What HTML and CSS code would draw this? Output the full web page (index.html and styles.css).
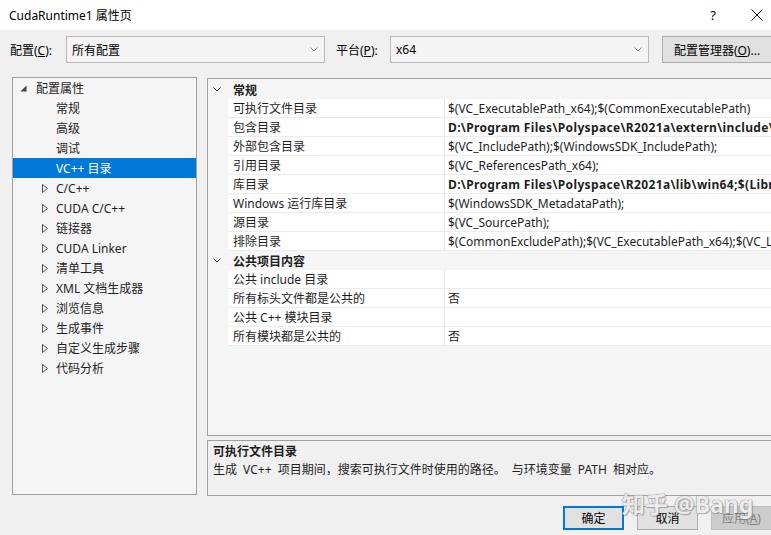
FILE: index.html
```html
<!DOCTYPE html>
<html lang="zh-CN">
<head>
<meta charset="utf-8">
<title>CudaRuntime1 属性页</title>
<link rel="stylesheet" href="styles.css">
</head>
<body>
<div class="window">
  <div class="titlebar">
    <span class="title">CudaRuntime1 属性页</span>
    <span class="help">?</span>
    <span class="close"><svg width="12" height="12" viewBox="0 0 12 12"><path d="M0.5 0.5L11.5 11.5M11.5 0.5L0.5 11.5" stroke="#111" stroke-width="1" fill="none"/></svg></span>
  </div>

  <div class="config-row">
    <span class="lbl lbl-config">配置(<u>C</u>):</span>
    <div class="combo"><span>所有配置</span><svg class="combo-arrow" width="8" height="5" viewBox="0 0 8 5"><polyline points="0.5,0.5 4,4 7.5,0.5" stroke="#808080" fill="none"/></svg></div>
    <span class="lbl lbl-platform">平台(<u>P</u>):</span>
    <div class="combo"><span>x64</span><svg class="combo-arrow" width="8" height="5" viewBox="0 0 8 5"><polyline points="0.5,0.5 4,4 7.5,0.5" stroke="#808080" fill="none"/></svg></div>
    <button class="btn btn-manager">配置管理器(<u>O</u>)...</button>
  </div>

  <div class="main">
    <div class="tree">
      <div class="node root"><span class="twisty"><svg width="7" height="7" viewBox="0 0 7 7"><polygon points="6.5,0.5 6.5,6.5 0.5,6.5" fill="#404040"/></svg></span>配置属性</div>
      <div class="node child"><span class="twisty"></span>常规</div>
      <div class="node child"><span class="twisty"></span>高级</div>
      <div class="node child"><span class="twisty"></span>调试</div>
      <div class="node child selected"><span class="twisty"></span>VC++ 目录</div>
      <div class="node child"><span class="twisty"><svg width="6" height="9" viewBox="0 0 6 9"><polygon points="0.5,0.5 5.5,4.5 0.5,8.5" fill="none" stroke="#505050"/></svg></span>C/C++</div>
      <div class="node child"><span class="twisty"><svg width="6" height="9" viewBox="0 0 6 9"><polygon points="0.5,0.5 5.5,4.5 0.5,8.5" fill="none" stroke="#505050"/></svg></span>CUDA C/C++</div>
      <div class="node child"><span class="twisty"><svg width="6" height="9" viewBox="0 0 6 9"><polygon points="0.5,0.5 5.5,4.5 0.5,8.5" fill="none" stroke="#505050"/></svg></span>链接器</div>
      <div class="node child"><span class="twisty"><svg width="6" height="9" viewBox="0 0 6 9"><polygon points="0.5,0.5 5.5,4.5 0.5,8.5" fill="none" stroke="#505050"/></svg></span>CUDA Linker</div>
      <div class="node child"><span class="twisty"><svg width="6" height="9" viewBox="0 0 6 9"><polygon points="0.5,0.5 5.5,4.5 0.5,8.5" fill="none" stroke="#505050"/></svg></span>清单工具</div>
      <div class="node child"><span class="twisty"><svg width="6" height="9" viewBox="0 0 6 9"><polygon points="0.5,0.5 5.5,4.5 0.5,8.5" fill="none" stroke="#505050"/></svg></span>XML 文档生成器</div>
      <div class="node child"><span class="twisty"><svg width="6" height="9" viewBox="0 0 6 9"><polygon points="0.5,0.5 5.5,4.5 0.5,8.5" fill="none" stroke="#505050"/></svg></span>浏览信息</div>
      <div class="node child"><span class="twisty"><svg width="6" height="9" viewBox="0 0 6 9"><polygon points="0.5,0.5 5.5,4.5 0.5,8.5" fill="none" stroke="#505050"/></svg></span>生成事件</div>
      <div class="node child"><span class="twisty"><svg width="6" height="9" viewBox="0 0 6 9"><polygon points="0.5,0.5 5.5,4.5 0.5,8.5" fill="none" stroke="#505050"/></svg></span>自定义生成步骤</div>
      <div class="node child"><span class="twisty"><svg width="6" height="9" viewBox="0 0 6 9"><polygon points="0.5,0.5 5.5,4.5 0.5,8.5" fill="none" stroke="#505050"/></svg></span>代码分析</div>
    </div>

    <div class="right">
      <div class="grid">
        <div class="row cat"><span class="gut"><svg width="8" height="5" viewBox="0 0 8 5"><polyline points="0.5,0.5 4,4 7.5,0.5" stroke="#333" fill="none"/></svg></span><span class="cat-name">常规</span></div>
        <div class="row prop"><span class="gut"></span><span class="name">可执行文件目录</span><span class="val">$(VC_ExecutablePath_x64);$(CommonExecutablePath)</span></div>
        <div class="row prop"><span class="gut"></span><span class="name">包含目录</span><span class="val bold">D:\Program Files\Polyspace\R2021a\extern\include\win64;$(IncludePath)</span></div>
        <div class="row prop"><span class="gut"></span><span class="name">外部包含目录</span><span class="val">$(VC_IncludePath);$(WindowsSDK_IncludePath);</span></div>
        <div class="row prop"><span class="gut"></span><span class="name">引用目录</span><span class="val">$(VC_ReferencesPath_x64);</span></div>
        <div class="row prop"><span class="gut"></span><span class="name">库目录</span><span class="val bold">D:\Program Files\Polyspace\R2021a\lib\win64;$(LibraryPath)</span></div>
        <div class="row prop"><span class="gut"></span><span class="name">Windows 运行库目录</span><span class="val">$(WindowsSDK_MetadataPath);</span></div>
        <div class="row prop"><span class="gut"></span><span class="name">源目录</span><span class="val">$(VC_SourcePath);</span></div>
        <div class="row prop"><span class="gut"></span><span class="name">排除目录</span><span class="val">$(CommonExcludePath);$(VC_ExecutablePath_x64);$(VC_LibraryPath_x64)</span></div>
        <div class="row cat"><span class="gut"><svg width="8" height="5" viewBox="0 0 8 5"><polyline points="0.5,0.5 4,4 7.5,0.5" stroke="#333" fill="none"/></svg></span><span class="cat-name">公共项目内容</span></div>
        <div class="row prop"><span class="gut"></span><span class="name">公共 include 目录</span><span class="val"></span></div>
        <div class="row prop"><span class="gut"></span><span class="name">所有标头文件都是公共的</span><span class="val">否</span></div>
        <div class="row prop"><span class="gut"></span><span class="name">公共 C++ 模块目录</span><span class="val"></span></div>
        <div class="row prop"><span class="gut"></span><span class="name">所有模块都是公共的</span><span class="val">否</span></div>
      </div>
      <div class="desc">
        <div class="desc-title">可执行文件目录</div>
        <div class="desc-text">生成 VC++ 项目期间，搜索可执行文件时使用的路径。 与环境变量 PATH 相对应。</div>
      </div>
    </div>
  </div>

  <div class="buttons">
    <button class="btn btn-ok">确定</button>
    <button class="btn">取消</button>
    <button class="btn btn-disabled">应用(<u>A</u>)</button>
  </div>

  <div class="watermark">知乎 @Bang</div>
</div>
</body>
</html>
```

FILE: styles.css
```css
* { box-sizing: border-box; }

html, body {
  margin: 0;
  padding: 0;
}

body {
  width: 771px;
  height: 535px;
  overflow: hidden;
  background: #f0f0f0;
  font-family: "Noto Sans", "Noto Sans CJK SC", sans-serif;
  font-size: 12px;
  color: #000;
}

.window {
  position: relative;
  width: 771px;
  height: 535px;
  overflow: hidden;
}

/* title bar */
.titlebar {
  height: 30px;
  background: #fff;
  display: flex;
  align-items: center;
  padding-left: 9px;
}
.title { flex: 1; font-size: 12px; }
.help { width: 44px; margin-right: 8px; text-align: center; font-size: 13px; }
.close {
  width: 28px;
  display: flex;
  justify-content: center;
}
.close svg { display: block; }

/* config row */
.config-row {
  display: flex;
  align-items: center;
  margin-top: 6px;
  padding-left: 10px;
  height: 27px;
}
.lbl { display: inline-block; white-space: nowrap; flex: none; }
.lbl-config { width: 56px; }
.lbl-platform { width: 54px; margin-left: 11px; }
.combo {
  flex: none;
  width: 259px;
  height: 27px;
  border: 1px solid #b9b9b9;
  background: #f4f4f4;
  display: flex;
  align-items: center;
  justify-content: space-between;
  padding: 0 6px 0 5px;
}
.combo-arrow { display: block; }

.btn {
  font-family: inherit;
  font-size: 12px;
  color: #000;
  background: #e1e1e1;
  border: 1px solid #adadad;
  padding: 0;
  margin: 0;
}
.btn-manager {
  flex: none;
  margin-left: 13px;
  width: 110px;
  height: 27px;
  white-space: nowrap;
}

/* main */
.main {
  display: flex;
  margin-top: 14px;
  height: 419px;
}

.tree {
  flex: none;
  margin-left: 12px;
  width: 185px;
  height: 418px;
  border: 1px solid #a0a0a0;
  background: #f5f5f5;
  color: #1e1e1e;
}
.node {
  height: 20px;
  display: flex;
  align-items: center;
  white-space: nowrap;
}
.node.root { padding-left: 7px; }
.node.root .twisty { width: 16px; }
.node.child { padding-left: 29px; }
.node.child .twisty { width: 14px; }
.twisty { display: flex; align-items: center; flex: none; }
.twisty svg { display: block; }
.node.selected { background: #0078d7; color: #fff; }

.right {
  flex: none;
  margin-left: 10px;
  width: 600px;
  display: flex;
  flex-direction: column;
}

.grid {
  margin-top: 1px;
  height: 358px;
  border: 1px solid #a0a0a0;
  background: #f5f5f5;
  padding-top: 1px;
  color: #1e1e1e;
}
.row {
  height: 19px;
  display: flex;
  white-space: nowrap;
}
.gut {
  width: 20px;
  flex: none;
  display: flex;
  align-items: center;
  padding-left: 5px;
}
.gut svg { display: block; }
.cat-name {
  font-weight: bold;
  padding-left: 5px;
  display: flex;
  align-items: center;
}
.prop .name {
  width: 217px;
  flex: none;
  background: #fff;
  border-right: 1px solid #e8e8e8;
  border-bottom: 1px solid #ececec;
  padding-left: 5px;
  display: flex;
  align-items: center;
  overflow: hidden;
}
.prop .val {
  flex: 1;
  background: #fff;
  border-bottom: 1px solid #ececec;
  padding-left: 3px;
  display: flex;
  align-items: center;
  overflow: hidden;
}
.val.bold { font-weight: bold; letter-spacing: 0.35px; }

.desc {
  margin-top: 4px;
  height: 56px;
  border: 1px solid #a0a0a0;
  background: #f0f0f0;
  padding: 2px 0 0 5px;
  color: #1e1e1e;
}
.desc-title { font-weight: bold; line-height: 18px; }
.desc-text { line-height: 18px; word-spacing: 3px; }

/* bottom buttons */
.buttons {
  display: flex;
  gap: 13px;
  padding-left: 563px;
  margin-top: 10px;
}
.buttons .btn { width: 61px; height: 24px; flex: none; }
.btn-ok { border: 2px solid #0078d7; }
.btn-disabled { background: #cccccc; border-color: #bfbfbf; color: #838383; }

.watermark {
  position: absolute;
  left: 622px;
  top: 486px;
  font-size: 23px;
  font-weight: bold;
  color: rgba(255,255,255,0.85);
  text-shadow: 0 0 1px #8a8a8a, 0 0 1px #8a8a8a, 1px 1px 1px rgba(0,0,0,0.25);
  white-space: nowrap;
}
```
